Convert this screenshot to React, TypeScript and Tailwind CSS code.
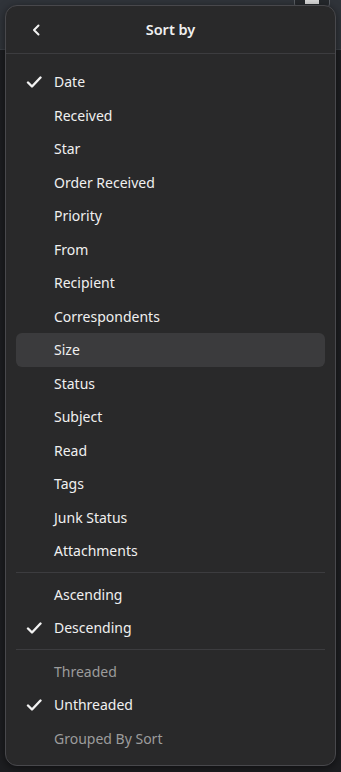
const sortItems = [
  { label: "Date", checked: true },
  { label: "Received" },
  { label: "Star" },
  { label: "Order Received" },
  { label: "Priority" },
  { label: "From" },
  { label: "Recipient" },
  { label: "Correspondents" },
  { label: "Size", hover: true },
  { label: "Status" },
  { label: "Subject" },
  { label: "Read" },
  { label: "Tags" },
  { label: "Junk Status" },
  { label: "Attachments" },
];

const orderItems = [{ label: "Ascending" }, { label: "Descending", checked: true }];

const threadItems = [
  { label: "Threaded", disabled: true },
  { label: "Unthreaded", checked: true },
  { label: "Grouped By Sort", disabled: true },
];

type Item = { label: string; checked?: boolean; hover?: boolean; disabled?: boolean };

const Check = () => (
  <svg width="16" height="16" viewBox="0 0 16 16" fill="none">
    <path d="M2 8.5l4 4L14.5 3.5" stroke="#f2f2f2" strokeWidth="2.4" strokeLinecap="round" strokeLinejoin="round" />
  </svg>
);

const Row = ({ item }: { item: Item }) => (
  <div
    className={`mx-[10px] h-[33.5px] flex items-center rounded-[6px] ${item.hover ? "bg-[#3b3b3d]" : ""}`}
  >
    <div className="w-[38px] pl-[10px] flex items-center">{item.checked && <Check />}</div>
    <span className={`text-[14px] ${item.disabled ? "text-[#9c9c9c]" : "text-[#f0f0f0]"}`}>{item.label}</span>
  </div>
);

const Sep = () => <div className="mx-[10px] my-[4.5px] h-px bg-[#3c3c3f]" />;

export default function App() {
  return (
    <div className="relative w-[341px] h-[772px] bg-[#1d1e21] overflow-hidden" style={{ fontFamily: '"Noto Sans", "Open Sans", sans-serif' }}>
      <div className="h-[50px] bg-[#30343a] border-b border-[#3b3f45] flex justify-end pr-[11px]">
        <div className="w-[36px] h-[10px] -mt-[2px] rounded-b-[4px] border border-[#5a5e64] bg-[#25282c] flex justify-center">
          <div className="w-[14px] h-[4px] bg-[#d8d8d8] mt-[1px]" />
        </div>
      </div>
      <div className="absolute left-[5px] top-[5px] w-[331px] h-[761px] rounded-[12px] border border-[#48484c] bg-[#29292a] shadow-[0_2px_8px_rgba(0,0,0,0.5)]">
        <div className="h-[47px] relative flex items-center justify-center">
          <svg className="absolute left-[24px] top-[17px]" width="14" height="14" viewBox="0 0 14 14" fill="none">
            <path d="M8.5 2.5L4 7l4.5 4.5" stroke="#f2f2f2" strokeWidth="2" strokeLinecap="round" strokeLinejoin="round" />
          </svg>
          <span className="text-[14.5px] font-semibold text-[#f0f0f0]">Sort by</span>
        </div>
        <div className="h-px bg-[#3c3c3f]" />
        <div className="pt-[11px]">
          {sortItems.map((it) => (
            <Row key={it.label} item={it} />
          ))}
          <Sep />
          {orderItems.map((it) => (
            <Row key={it.label} item={it} />
          ))}
          <Sep />
          {threadItems.map((it) => (
            <Row key={it.label} item={it} />
          ))}
        </div>
      </div>
    </div>
  );
}
